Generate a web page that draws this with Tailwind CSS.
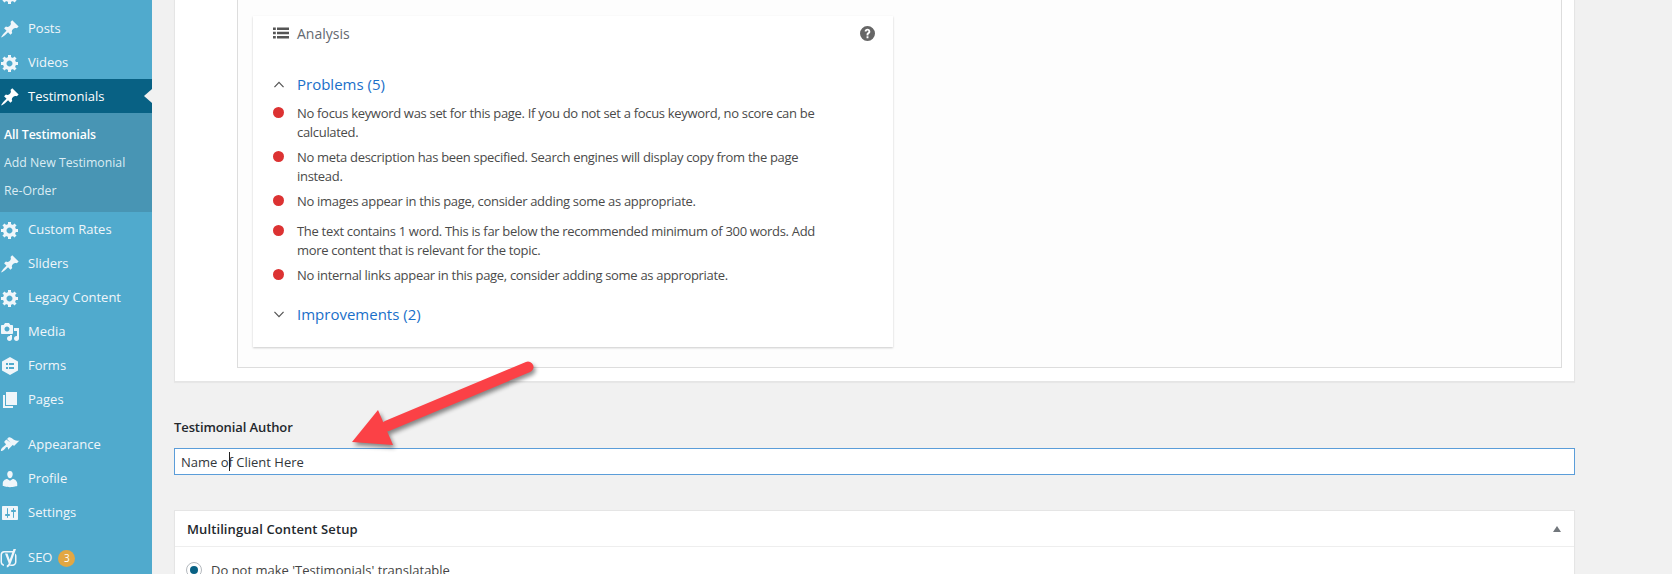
<!DOCTYPE html>
<html lang="en">
<head>
<meta charset="utf-8">
<title>Testimonial</title>
<script src="https://cdn.jsdelivr.net/npm/@tailwindcss/browser@4"></script>
</head>
<body class="m-0 h-[574px] w-[1672px] overflow-hidden bg-[#f1f1f1] font-['Open_Sans',sans-serif] text-[13px] text-[#444]">
<div class="relative flex h-[574px] w-[1672px] overflow-hidden">

<!-- sidebar -->
<aside class="flex h-[574px] w-[152px] shrink-0 flex-col bg-[#50aacd] text-[#f0f6fa]">
  <div class="-mt-[23px] flex h-[34px] shrink-0 items-center gap-2 pt-[2px]">
    <svg viewBox="0 0 20 20" class="h-[20px] w-[20px] fill-current"><path d="M18 12h-2.18c-.17.7-.44 1.35-.81 1.93l1.54 1.54-2.1 2.1-1.54-1.54c-.58.36-1.23.63-1.91.79V19H8v-2.18c-.68-.16-1.33-.43-1.91-.79l-1.54 1.54-2.12-2.12 1.54-1.54c-.36-.58-.63-1.23-.79-1.91H1V9.03h2.17c.16-.7.44-1.35.8-1.94L2.43 5.55l2.1-2.1 1.54 1.54c.58-.37 1.24-.64 1.93-.81V2h3v2.18c.68.16 1.33.43 1.91.79l1.54-1.54 2.12 2.12-1.54 1.54c.36.59.64 1.24.8 1.94H18V12zm-8.5 1.5c1.66 0 3-1.34 3-3s-1.34-3-3-3-3 1.34-3 3 1.34 3 3 3z"/></svg>
  </div>
  <a class="flex h-[34px] shrink-0 items-center gap-2 pt-[2px]">
    <svg viewBox="0 0 20 20" class="h-[20px] w-[20px] fill-current"><path d="M10.44 3.02l1.82-1.82 6.36 6.35-1.83 1.82c-1.05-.68-2.48-.57-3.41.36l-.75.75c-.92.93-1.04 2.35-.35 3.41l-1.83 1.82-2.41-2.41-2.8 2.79c-.42.42-3.38 2.71-3.8 2.29s1.86-3.39 2.28-3.81l2.79-2.79L4.1 9.36l1.83-1.82c1.05.69 2.48.57 3.4-.36l.75-.75c.93-.92 1.05-2.35.36-3.41z"/></svg>
    <span>Posts</span>
  </a>
  <a class="flex h-[34px] shrink-0 items-center gap-2 pt-[2px]">
    <svg viewBox="0 0 20 20" class="h-[20px] w-[20px] fill-current"><path d="M18 12h-2.18c-.17.7-.44 1.35-.81 1.93l1.54 1.54-2.1 2.1-1.54-1.54c-.58.36-1.23.63-1.91.79V19H8v-2.18c-.68-.16-1.33-.43-1.91-.79l-1.54 1.54-2.12-2.12 1.54-1.54c-.36-.58-.63-1.23-.79-1.91H1V9.03h2.17c.16-.7.44-1.35.8-1.94L2.43 5.55l2.1-2.1 1.54 1.54c.58-.37 1.24-.64 1.93-.81V2h3v2.18c.68.16 1.33.43 1.91.79l1.54-1.54 2.12 2.12-1.54 1.54c.36.59.64 1.24.8 1.94H18V12zm-8.5 1.5c1.66 0 3-1.34 3-3s-1.34-3-3-3-3 1.34-3 3 1.34 3 3 3z"/></svg>
    <span>Videos</span>
  </a>
  <a class="relative flex h-[34px] shrink-0 items-center gap-2 bg-[#086184] pt-[2px] text-white">
    <svg viewBox="0 0 20 20" class="h-[20px] w-[20px] fill-current"><path d="M10.44 3.02l1.82-1.82 6.36 6.35-1.83 1.82c-1.05-.68-2.48-.57-3.41.36l-.75.75c-.92.93-1.04 2.35-.35 3.41l-1.83 1.82-2.41-2.41-2.8 2.79c-.42.42-3.38 2.71-3.8 2.29s1.86-3.39 2.28-3.81l2.79-2.79L4.1 9.36l1.83-1.82c1.05.69 2.48.57 3.4-.36l.75-.75c.93-.92 1.05-2.35.36-3.41z"/></svg>
    <span>Testimonials</span>
    <span class="absolute right-0 top-[10px] h-0 w-0 border-y-[7px] border-r-[8px] border-y-transparent border-r-[#f1f1f1]"></span>
  </a>
  <div class="flex h-[99px] shrink-0 flex-col bg-[#4895b4] pl-1 pt-[8px] text-[12.3px] text-[#dbecf3]">
    <a class="flex h-[28px] shrink-0 items-center font-semibold tracking-[-0.1px] text-white">All Testimonials</a>
    <a class="flex h-[28px] shrink-0 items-center">Add New Testimonial</a>
    <a class="flex h-[28px] shrink-0 items-center">Re-Order</a>
  </div>
  <a class="flex h-[34px] shrink-0 items-center gap-2 pt-[2px]">
    <svg viewBox="0 0 20 20" class="h-[20px] w-[20px] fill-current"><path d="M18 12h-2.18c-.17.7-.44 1.35-.81 1.93l1.54 1.54-2.1 2.1-1.54-1.54c-.58.36-1.23.63-1.91.79V19H8v-2.18c-.68-.16-1.33-.43-1.91-.79l-1.54 1.54-2.12-2.12 1.54-1.54c-.36-.58-.63-1.23-.79-1.91H1V9.03h2.17c.16-.7.44-1.35.8-1.94L2.43 5.55l2.1-2.1 1.54 1.54c.58-.37 1.24-.64 1.93-.81V2h3v2.18c.68.16 1.33.43 1.91.79l1.54-1.54 2.12 2.12-1.54 1.54c.36.59.64 1.24.8 1.94H18V12zm-8.5 1.5c1.66 0 3-1.34 3-3s-1.34-3-3-3-3 1.34-3 3 1.34 3 3 3z"/></svg>
    <span>Custom Rates</span>
  </a>
  <a class="flex h-[34px] shrink-0 items-center gap-2 pt-[2px]">
    <svg viewBox="0 0 20 20" class="h-[20px] w-[20px] fill-current"><path d="M10.44 3.02l1.82-1.82 6.36 6.35-1.83 1.82c-1.05-.68-2.48-.57-3.41.36l-.75.75c-.92.93-1.04 2.35-.35 3.41l-1.83 1.82-2.41-2.41-2.8 2.79c-.42.42-3.38 2.71-3.8 2.29s1.86-3.39 2.28-3.81l2.79-2.79L4.1 9.36l1.83-1.82c1.05.69 2.48.57 3.4-.36l.75-.75c.93-.92 1.05-2.35.36-3.41z"/></svg>
    <span>Sliders</span>
  </a>
  <a class="flex h-[34px] shrink-0 items-center gap-2 pt-[2px]">
    <svg viewBox="0 0 20 20" class="h-[20px] w-[20px] fill-current"><path d="M18 12h-2.18c-.17.7-.44 1.35-.81 1.93l1.54 1.54-2.1 2.1-1.54-1.54c-.58.36-1.23.63-1.91.79V19H8v-2.18c-.68-.16-1.33-.43-1.91-.79l-1.54 1.54-2.12-2.12 1.54-1.54c-.36-.58-.63-1.23-.79-1.91H1V9.03h2.17c.16-.7.44-1.35.8-1.94L2.43 5.55l2.1-2.1 1.54 1.54c.58-.37 1.24-.64 1.93-.81V2h3v2.18c.68.16 1.33.43 1.91.79l1.54-1.54 2.12 2.12-1.54 1.54c.36.59.64 1.24.8 1.94H18V12zm-8.5 1.5c1.66 0 3-1.34 3-3s-1.34-3-3-3-3 1.34-3 3 1.34 3 3 3z"/></svg>
    <span>Legacy Content</span>
  </a>
  <a class="flex h-[34px] shrink-0 items-center gap-2 pt-[2px]">
    <svg viewBox="0 0 20 20" class="h-[20px] w-[20px] fill-current"><path d="M13 11V4c0-.55-.45-1-1-1h-1.67L9 1H5L3.67 3H2c-.55 0-1 .45-1 1v7c0 .55.45 1 1 1h10c.55 0 1-.45 1-1zM7 4.5c1.38 0 2.5 1.12 2.5 2.5S8.38 9.5 7 9.5 4.5 8.38 4.5 7 5.62 4.5 7 4.5zM14 6h5v10.5c0 1.38-1.12 2.5-2.5 2.5S14 17.88 14 16.5s1.12-2.5 2.5-2.5c.17 0 .34.02.5.05V9h-3V6zm-4 8.05V13h2v3.5c0 1.38-1.12 2.5-2.5 2.5S7 17.88 7 16.5 8.12 14 9.5 14c.17 0 .34.02.5.05z"/></svg>
    <span>Media</span>
  </a>
  <a class="flex h-[34px] shrink-0 items-center gap-2 pt-[2px]">
    <svg viewBox="0 0 20 20" class="h-[20px] w-[20px] fill-current"><path fill-rule="evenodd" d="M10 1l8 4.5v9L10 19l-8-4.5v-9L10 1zM6 7v2h2V7H6zm3 0v2h5V7H9zm-3 4v2h2v-2H6zm3 0v2h5v-2H9z"/></svg>
    <span>Forms</span>
  </a>
  <a class="flex h-[34px] shrink-0 items-center gap-2 pt-[2px]">
    <svg viewBox="0 0 20 20" class="h-[20px] w-[20px] fill-current"><path d="M6 15V2h11v13H6zm-1 1h8v2H3V5h2v11z"/></svg>
    <span>Pages</span>
  </a>
  <div class="h-[11px] shrink-0"></div>
  <a class="flex h-[34px] shrink-0 items-center gap-2 pt-[2px]">
    <svg viewBox="0 0 20 20" class="h-[20px] w-[20px] fill-current"><path d="M19.5 5.5c-2 .6-3.6.3-5-.4-1.5-.8-1.8-1.4-3-2.1-1.2-.7-2.6-.9-3.2-.3L7 3.9l7 7 5.500-5.400zM6.300 4.600L4.600 6.300c-.4.400-.4 1 0 1.400l1 1c.4.400.4 1 0 1.400-.6.600-1.500 1.100-2.200 1.700-.4.300-.7.500-1 .800C1.100 13.900.6 15.400 1 15.900s1.900 0 3.200-1.300c.9-.9 1.200-1.600 1.600-2.100.3-.4.800-.8 1.400-.5.6.300.8.800.8 1.300s0 1.500 0 1.500l5.200-5.200-6.900-5z"/></svg>
    <span>Appearance</span>
  </a>
  <a class="flex h-[34px] shrink-0 items-center gap-2 pt-[2px]">
    <svg viewBox="0 0 20 20" class="h-[20px] w-[20px] fill-current"><path d="M10 9.25c-2.27 0-2.73-3.44-2.73-3.44C7 4.020 7.820 2 9.970 2c2.160 0 2.980 2.020 2.710 3.810 0 0-.41 3.440-2.680 3.440zm0 2.570L12.720 10c2.390 0 4.520 2.330 4.520 4.530v2.490s-3.650 1.130-7.240 1.130c-3.650 0-7.240-1.130-7.240-1.130v-2.490c0-2.250 1.940-4.480 4.470-4.480z"/></svg>
    <span>Profile</span>
  </a>
  <a class="flex h-[34px] shrink-0 items-center gap-2 pt-[2px]">
    <svg viewBox="0 0 20 20" class="h-[20px] w-[20px] fill-current"><path d="M18 16V4c0-.55-.45-1-1-1H3c-.55 0-1 .45-1 1v12c0 .55.45 1 1 1h14c.55 0 1-.45 1-1zM8 11h1c.55 0 1 .45 1 1s-.45 1-1 1H8v1.500c0 .28-.22.5-.5.5s-.5-.22-.5-.5V13H6c-.55 0-1-.45-1-1s.45-1 1-1h1V5.500c0-.28.22-.5.5-.5s.5.22.5.5V11zm5-2h-1c-.55 0-1-.45-1-1s.45-1 1-1h1V5.500c0-.28.22-.5.5-.5s.5.22.5.5V7h1c.55 0 1 .45 1 1s-.45 1-1 1h-1v5.500c0 .28-.22.5-.5.5s-.5-.22-.5-.5V9z"/></svg>
    <span>Settings</span>
  </a>
  <div class="h-[11px] shrink-0"></div>
  <a class="flex h-[34px] shrink-0 items-center gap-2 pt-[2px]">
    <svg viewBox="0 0 20 20" class="h-[20px] w-[20px] fill-current"><path d="M4 3h9.500l-1 1.500H4.500C3.200 4.500 2 5.600 2 7v7c0 1.200.9 2.200 2 2.400V18c-2-.2-3.500-1.900-3.500-4V6.500C.5 4.600 2 3 4 3zM15 5.500c.9.500 1.500 1.400 1.500 2.500v6c0 2.200-1.800 4-4 4H10l.5-1.500h2c1.400 0 2.500-1.100 2.500-2.500V5.500zM13.500 1h2.500l-5.500 15c-.6 1.700-1.700 3-3.700 3.500v-2.300c1-.4 1.600-1 1.900-2L5 5.500h2.500l2.200 6.300L13.500 1z"/></svg>
    <span>SEO</span>
    <span class="-ml-[2px] flex h-[17px] w-[17px] items-center justify-center rounded-full bg-[#e2a743] text-[10px] text-white">3</span>
  </a>
</aside>

<!-- main -->
<main class="flex min-w-0 flex-1 flex-col pl-[22px] pr-[97px]">
  <section class="-mt-[1px] h-[383px] shrink-0 border-x border-b border-[#e5e5e5] bg-white pl-[62px] pr-[12px] shadow-[0_1px_1px_rgba(0,0,0,0.04)]">
    <div class="h-[369px] border-x border-b border-[#dddddd] bg-[#fdfdfd] pl-[15px] pt-[17px]">
      <div class="flex h-[331px] w-[640px] flex-col bg-white shadow-[0_1px_2px_rgba(0,0,0,0.2)]">
        <div class="flex h-[34px] items-center pl-[20px] pr-[18px] text-[14px] text-[#646970]">
          <svg viewBox="0 0 16 16" class="mr-[8px] h-[16px] w-[16px] fill-[#555]"><path d="M0 2.500h2.800v2.400H0zM4 2.500h12v2.400H4zM0 6.800h2.800v2.400H0zM4 6.800h12v2.400H4zM0 11.100h2.800v2.400H0zM4 11.100h12v2.400H4z"/></svg>
          <span>Analysis</span>
          <svg viewBox="0 0 16 16" class="ml-auto h-[15px] w-[15px] fill-[#666]"><path fill-rule="evenodd" d="M8 0a8 8 0 1 1 0 16A8 8 0 0 1 8 0zM7 11v2h2v-2H7zM8 3C6.200 3 5 4 5 5.800h2C7 5.200 7.400 4.800 8 4.800s1 .4 1 1c0 .5-.3.8-.9 1.200C7.300 7.600 7 8.200 7 9v1h2v-.6c0-.5.2-.8.8-1.200C10.600 7.600 11 6.900 11 6c0-1.800-1.300-3-3-3z"/></svg>
        </div>
        <h3 class="mt-[23px] flex h-[22px] items-center pl-[20px] text-[15px] font-normal text-[#1a6fc9]">
          <svg viewBox="0 0 12 8" class="mr-[12px] h-[7px] w-[12px] fill-none stroke-[#555] stroke-[1.400]"><path d="M.8 7L6 1.500 11.200 7"/></svg>
          <span>Problems (5)</span>
        </h3>
        <ul class="mt-[9px] flex flex-col pl-[20px] pr-[60px] text-[13px] leading-[19px] tracking-[-0.31px] text-[#4a4a4a]">
          <li class="flex gap-[13px]"><span class="mt-[3px] h-[11px] w-[11px] shrink-0 rounded-full bg-[#dc3232]"></span><span>No focus keyword was set for this page. If you do not set a focus keyword, no score can be calculated.</span></li>
          <li class="mt-[6px] flex gap-[13px]"><span class="mt-[3px] h-[11px] w-[11px] shrink-0 rounded-full bg-[#dc3232]"></span><span>No meta description has been specified. Search engines will display copy from the page instead.</span></li>
          <li class="mt-[6px] flex gap-[13px]"><span class="mt-[3px] h-[11px] w-[11px] shrink-0 rounded-full bg-[#dc3232]"></span><span>No images appear in this page, consider adding some as appropriate.</span></li>
          <li class="mt-[11px] flex gap-[13px]"><span class="mt-[3px] h-[11px] w-[11px] shrink-0 rounded-full bg-[#dc3232]"></span><span>The text contains 1 word. This is far below the recommended minimum of 300 words. Add more content that is relevant for the topic.</span></li>
          <li class="mt-[6px] flex gap-[13px]"><span class="mt-[3px] h-[11px] w-[11px] shrink-0 rounded-full bg-[#dc3232]"></span><span>No internal links appear in this page, consider adding some as appropriate.</span></li>
        </ul>
        <h3 class="mt-[18px] flex h-[22px] items-center pl-[20px] text-[15px] font-normal text-[#1a6fc9]">
          <svg viewBox="0 0 12 8" class="mr-[12px] h-[7px] w-[12px] fill-none stroke-[#555] stroke-[1.400]"><path d="M.8 1L6 6.500 11.200 1"/></svg>
          <span>Improvements (2)</span>
        </h3>
      </div>
    </div>
  </section>

  <label class="mt-[37px] block h-[17px] text-[13px] font-semibold leading-[17px] tracking-[-0.1px] text-[#23282d]">Testimonial Author</label>
  <div class="relative mt-[12px] flex h-[27px] shrink-0 items-center border border-[#5b9dd9] bg-white pl-[6px] pt-[2px] text-[13px] text-[#32373c]">
    <span>Name of Client Here</span>
    <span class="absolute left-[54px] top-[3px] h-[19px] w-px bg-[#222]"></span>
  </div>

  <section class="mt-[35px] shrink-0 border border-[#e5e5e5] bg-white shadow-[0_1px_1px_rgba(0,0,0,0.04)]">
    <div class="flex h-[36px] items-center justify-between border-b border-[#eeeeee] pl-[12px] pr-[13px]">
      <h2 class="pt-[2px] text-[13px] font-semibold tracking-[0.1px] text-[#23282d]">Multilingual Content Setup</h2>
      <span class="h-0 w-0 border-x-[4px] border-b-[6px] border-x-transparent border-b-[#72777c]"></span>
    </div>
    <div class="flex h-[60px] items-start gap-[9px] pl-[11px] pt-[15px]">
      <span class="flex h-[16px] w-[16px] shrink-0 items-center justify-center rounded-full border border-[#b4b9be] bg-white"><span class="h-[8px] w-[8px] rounded-full bg-[#086184]"></span></span>
      <span class="-mt-[1px] text-[13px] text-[#444]">Do not make 'Testimonials' translatable</span>
    </div>
  </section>
</main>

<!-- annotation arrow -->
<svg viewBox="0 0 1672 574" class="pointer-events-none absolute left-0 top-0 h-[574px] w-[1672px] drop-shadow-[2px_3px_2px_rgba(0,0,0,0.45)]">
  <path d="M387 426L528 367" fill="none" stroke="#fb4146" stroke-width="11" stroke-linecap="round"/>
  <path d="M352 442L378 410L393 445Z" fill="#fb4146"/>
</svg>
</div>
</body>
</html>
